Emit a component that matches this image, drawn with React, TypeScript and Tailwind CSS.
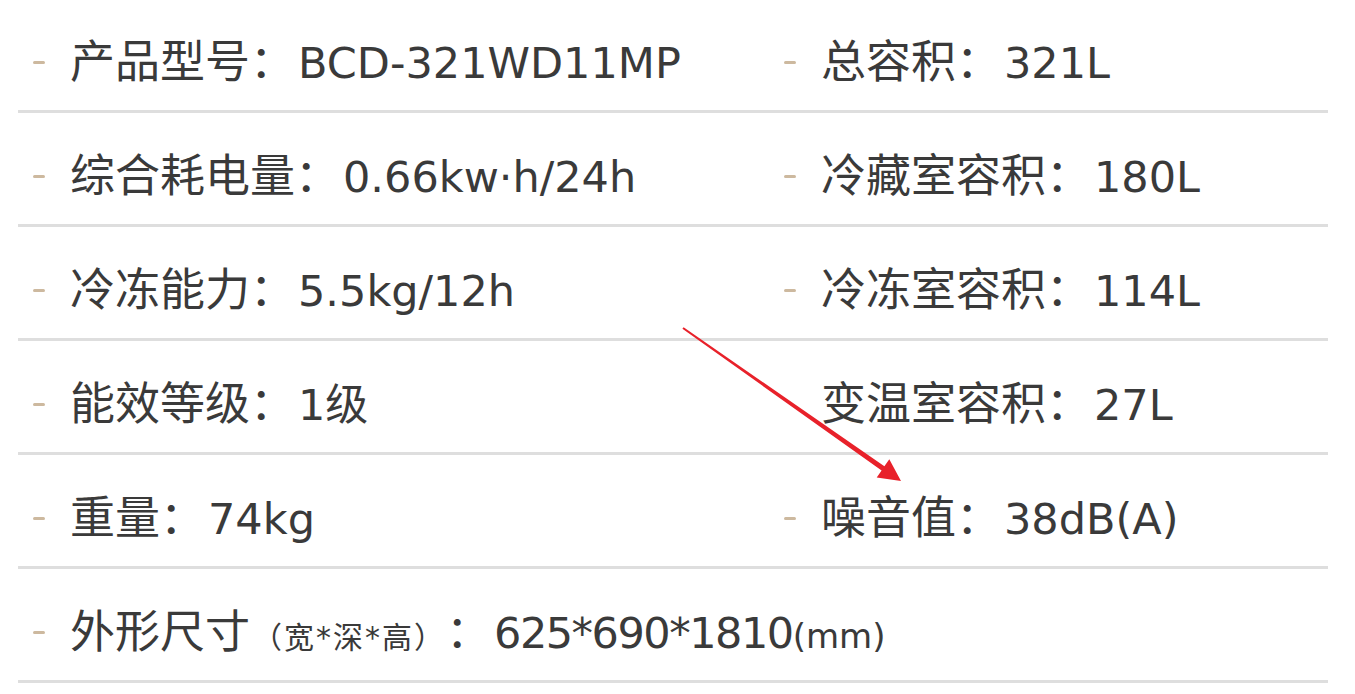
import React from "react";

type Cell = { label: string; value: string; dash?: boolean };

const rows: [Cell, Cell | null][] = [
  [
    { label: "产品型号：", value: "BCD-321WD11MP" },
    { label: "总容积：", value: "321L" },
  ],
  [
    { label: "综合耗电量：", value: "0.66kw·h/24h" },
    { label: "冷藏室容积：", value: "180L" },
  ],
  [
    { label: "冷冻能力：", value: "5.5kg/12h" },
    { label: "冷冻室容积：", value: "114L" },
  ],
  [
    { label: "能效等级：", value: "1级" },
    { label: "变温室容积：", value: "27L", dash: false },
  ],
  [
    { label: "重量：", value: "74kg" },
    { label: "噪音值：", value: "38dB(A)" },
  ],
];

function Dash({ hidden }: { hidden?: boolean }) {
  return (
    <span
      className={`block w-[12px] h-[3px] shrink-0 rounded-full ${
        hidden ? "bg-transparent" : "bg-[#cdb99f]"
      }`}
    />
  );
}

function SpecCell({ cell }: { cell: Cell }) {
  return (
    <div className="flex items-center pl-[15px]">
      <Dash hidden={cell.dash === false} />
      <span className="ml-[25px] whitespace-nowrap">
        <span className="text-[45px]">{cell.label}</span>
        <span className="ml-[3px]">{cell.value}</span>
      </span>
    </div>
  );
}

export default function App() {
  return (
    <div
      className="relative w-[1355px] h-[694px] overflow-hidden bg-white text-[#3a3a3a] text-[43px] leading-none"
      style={{ fontFamily: '"DejaVu Sans", "Noto Sans CJK SC", sans-serif' }}
    >
      <div className="ml-[18px] w-[1310px] -mt-[1px]">
        {rows.map(([left, right], i) => (
          <div
            key={i}
            className="grid grid-cols-[751px_1fr] items-center h-[114px] pt-[15px] border-b-[3px] border-[#dedede]"
          >
            <SpecCell cell={left} />
            {right ? <SpecCell cell={right} /> : <div />}
          </div>
        ))}

        {/* 外形尺寸 */}
        <div className="flex items-center h-[114px] pt-[15px] border-b-[3px] border-[#dedede]">
          <div className="flex items-center pl-[15px]">
            <Dash />
            <span className="ml-[25px] whitespace-nowrap flex items-baseline">
              <span className="text-[45px]">外形尺寸</span>
              <span className="text-[30px] ml-[2px] tracking-[2px]">（宽*深*高）</span>
              <span className="text-[45px]">：</span>
              <span className="ml-[3px] tracking-[-1.5px]">625*690*1810</span>
              <span className="text-[34px]">(mm)</span>
            </span>
          </div>
        </div>
      </div>

      {/* annotation arrow */}
      <svg
        className="absolute inset-0 pointer-events-none"
        width="1355"
        height="694"
        viewBox="0 0 1355 694"
      >
        <polygon
          fill="#e8212a"
          points="682.4,328.8 881.6,470.4 876.7,477.4 901,481 889.3,459.3 884.4,466.3 683.6,327.2"
        />
      </svg>
    </div>
  );
}
